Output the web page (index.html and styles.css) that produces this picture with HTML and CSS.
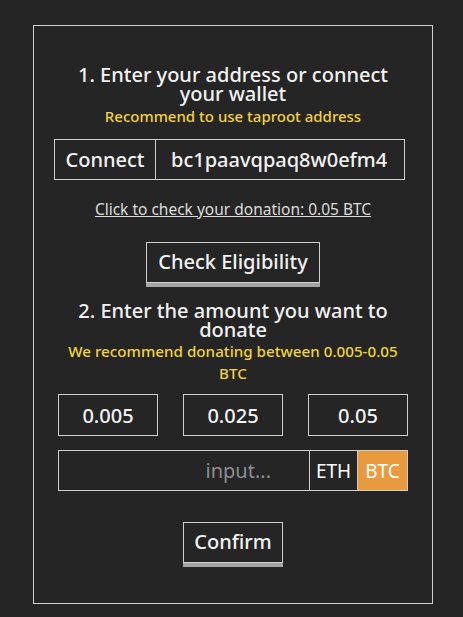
FILE: index.html
```html
<!DOCTYPE html>
<html lang="en">
<head>
    <meta charset="UTF-8">
    <meta name="viewport" content="width=device-width, initial-scale=1.0">
    <title>Donate</title>
    <link rel="stylesheet" href="styles.css">
</head>
<body>
    <div class="card">
        <h2 class="step-title">1. Enter your address or connect your wallet</h2>
        <p class="hint">Recommend to use taproot address</p>

        <div class="address-row">
            <button class="connect-btn">Connect</button>
            <input class="address-input" type="text" value="bc1paavqpaq8w0efm4xk2lq0p7s3d" />
        </div>

        <a href="#" class="check-link">Click to check your donation: 0.05 BTC</a>

        <button class="action-btn">Check Eligibility</button>

        <h2 class="step-title second">2. Enter the amount you want to donate</h2>
        <p class="hint hint-wide">We recommend donating between 0.005-0.05 BTC</p>

        <div class="amounts">
            <button class="amount">0.005</button>
            <button class="amount">0.025</button>
            <button class="amount">0.05</button>
        </div>

        <div class="custom-row">
            <input class="custom-input" type="text" placeholder="input..." />
            <button class="coin">ETH</button>
            <button class="coin active">BTC</button>
        </div>

        <button class="action-btn confirm">Confirm</button>
    </div>
</body>
</html>
```

FILE: styles.css
```css
* {
    margin: 0;
    padding: 0;
    box-sizing: border-box;
    font-family: 'Noto Sans', 'Open Sans', sans-serif;
}

:root {
    --background: #252525;
    --border: #cfcfcf;
    --text: #f2f2f2;
    --yellow: #f2d33a;
    --orange: #e99a3f;
    --gray: #8b8e94;
}

body {
    background: var(--background);
    color: var(--text);
}

.card {
    width: 400px;
    height: 579px;
    margin: 25px 0 0 33px;
    border: 1px solid var(--border);
    padding-top: 39px;
    display: flex;
    flex-direction: column;
    align-items: center;
}

.step-title {
    font-size: 20px;
    font-weight: 500;
    line-height: 19px;
    text-align: center;
    width: 335px;
}

.step-title.second {
    margin-top: 18px;
}

.hint {
    color: var(--yellow);
    font-size: 15px;
    font-weight: 500;
    line-height: 22px;
    text-align: center;
    margin-top: 2px;
}

.hint-wide {
    width: 345px;
    font-size: 15.2px;
    margin-top: 1px;
}

.address-row {
    display: flex;
    width: 351px;
    height: 41px;
    margin-top: 12px;
    margin-left: -7px;
    border: 1px solid var(--border);
}

.connect-btn {
    width: 101px;
    background: transparent;
    border: none;
    border-right: 1px solid var(--border);
    color: var(--text);
    font-size: 20px;
    font-weight: 500;
}

.address-input {
    flex: 1;
    min-width: 0;
    background: transparent;
    border: none;
    outline: none;
    color: var(--text);
    font-size: 20px;
    font-weight: 500;
    padding: 0 17px 0 15px;
}

.check-link {
    color: #dcdcdc;
    font-size: 15.5px;
    line-height: 21px;
    margin-top: 19px;
}

.action-btn {
    background: transparent;
    color: var(--text);
    border: 1px solid var(--border);
    box-shadow: 0 4px 0 #a6a6a6;
    height: 41px;
    padding: 0 11px 2px;
    font-size: 20px;
    font-weight: 500;
    margin-top: 22px;
    cursor: pointer;
}

.amounts {
    display: flex;
    gap: 25px;
    margin-top: 10px;
}

.amount {
    width: 100px;
    height: 42px;
    background: transparent;
    border: 1px solid var(--border);
    color: var(--text);
    font-size: 20px;
    font-weight: 500;
    cursor: pointer;
}

.custom-row {
    display: flex;
    width: 350px;
    height: 41px;
    margin-top: 14px;
    border: 1px solid var(--border);
}

.custom-input {
    flex: 1;
    min-width: 0;
    background: transparent;
    border: none;
    outline: none;
    color: var(--text);
    text-align: right;
    padding-right: 38px;
    font-size: 20px;
}

.custom-input::placeholder {
    color: var(--gray);
}

.coin {
    width: 48px;
    background: transparent;
    border: none;
    border-left: 1px solid var(--border);
    color: #ffffff;
    font-size: 19px;
    cursor: pointer;
}

.coin.active {
    width: 50px;
    background: var(--orange);
}

.confirm {
    margin-top: 31px;
    padding: 0 10px 2px;
}
```
